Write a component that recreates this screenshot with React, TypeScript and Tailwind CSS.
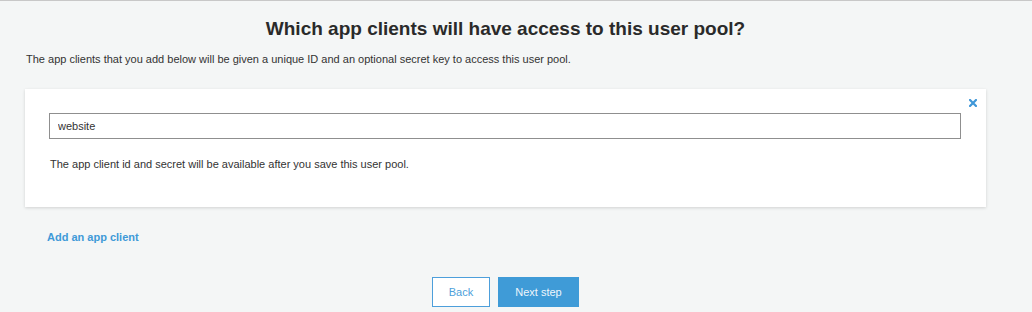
import React from 'react';

const App: React.FC = () => {
  return (
    <div className="min-h-[312px] w-full border-t border-[#c8c8c8] bg-[#f4f6f6] font-['Liberation_Sans',Arial,sans-serif] text-[#333]">
      <div className="w-[1011px] px-[25px] pt-[17px]">
        <h2 className="text-center text-[19px] font-bold leading-[22px] text-[#2a2a2a]">
          Which app clients will have access to this user pool?
        </h2>
        <p className="mt-[12px] pl-px text-[11px] leading-[14px] text-[#333]">
          The app clients that you add below will be given a unique ID and an optional secret key to access this user pool.
        </p>

        <div className="relative mt-[23px] h-[118px] bg-white px-6 pt-6 shadow-[0_1px_3px_rgba(0,0,0,0.15)]">
          <button className="absolute right-[9px] top-[10px] text-[#3f97d8]">
            <svg width="8" height="8" viewBox="0 0 8 8">
              <path d="M1 1 L7 7 M7 1 L1 7" stroke="currentColor" strokeWidth="2.2" strokeLinecap="square" />
            </svg>
          </button>
          <input
            readOnly
            value="website"
            className="block h-[26px] w-[912px] border border-[#8f8f8f] px-[8px] text-[11px] text-[#333] outline-none"
          />
          <p className="mt-[18px] pl-px text-[11px] leading-[14px] text-[#333]">
            The app client id and secret will be available after you save this user pool.
          </p>
        </div>

        <a className="mt-[23px] ml-[22px] block text-[11px] font-bold leading-[14px] text-[#3f9ad8]">
          Add an app client
        </a>

        <div className="mt-[33px] flex justify-center gap-2">
          <button className="h-[30px] w-[58px] border border-[#4d9fdb] bg-white text-[11px] text-[#4d9fdb]">
            Back
          </button>
          <button className="h-[30px] w-[81px] bg-[#3f9bd7] text-[11px] text-[#eef6fc]">
            Next step
          </button>
        </div>
      </div>
    </div>
  );
};

export default App;
